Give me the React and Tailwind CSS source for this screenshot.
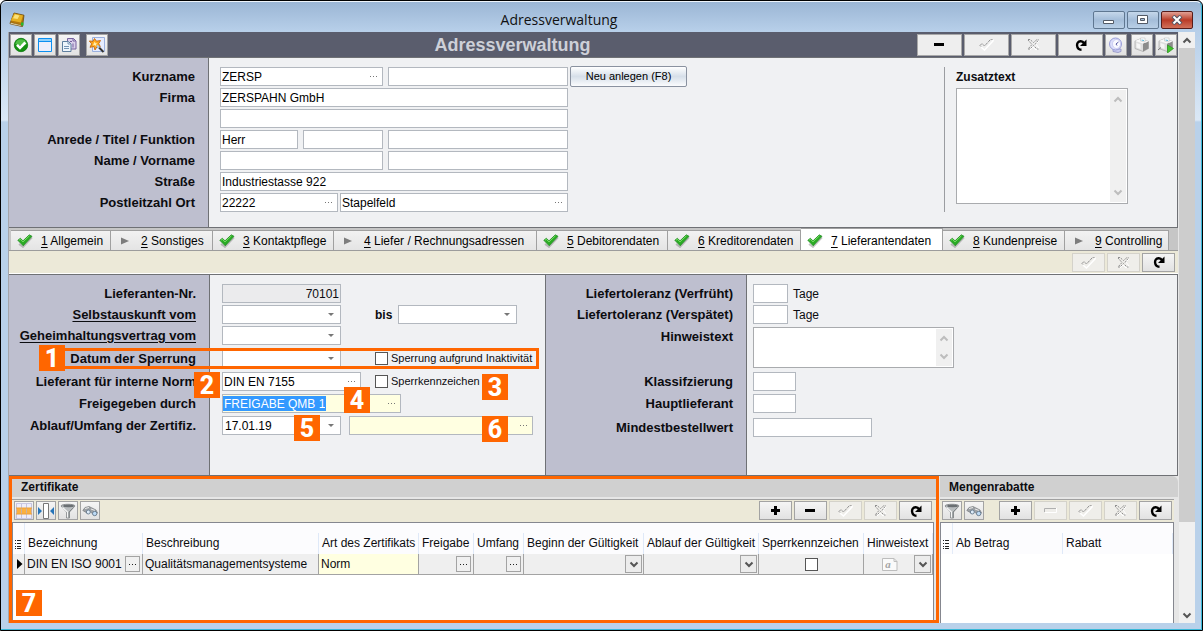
import React from "react";

const FIELD = "h-[19px] min-w-0 border border-[#b3b8bf] bg-white px-px text-[12px] text-black outline-none";

function Svg({ w = 16, h = 16, children }) {
  return (
    <svg width={w} height={h} viewBox={`0 0 ${w} ${h}`} fill="none" aria-hidden="true" className="shrink-0">
      {children}
    </svg>
  );
}

/* ---------- glyphs ---------- */

const Minus = () => <Svg w={11} h={11}><path d="M0 4h10v3H0z" fill="#000" /></Svg>;
const Plus = () => <Svg w={11} h={11}><path d="M4 1h3v3h3v3H7v3H4V7H1V4h3z" fill="#000" /></Svg>;
const MinusOff = () => <Svg w={13} h={7}><path d="M12.500 1v4.500H1" stroke="#fff" /><path d="M.5 5V1.500H12" stroke="#b0b0b0" /></Svg>;
const TickOff = () => (
  <Svg w={15} h={13}>
    <path d="M2 9l3.500 3L14 3V1.500" stroke="#fff" strokeWidth="1.500" />
    <path d="M1 7.500l2-2 2.500 2.500L11.500 1.500h2M1 7.500l1 1" stroke="#8f8f8f" strokeDasharray="3 1" />
  </Svg>
);
const CrossOff = () => (
  <Svg w={13} h={13}>
    <path d="M3 12l3-3 3 3 3-2-3-4 3-3" stroke="#fff" />
    <path d="M1 1.500h2l3.500 3 3.500-3h1.500M1 2l4 4.500L1 11h2l3.500-3.500L10 11h1.500M8 6.500L11.500 2" stroke="#8f8f8f" strokeDasharray="2 1" />
  </Svg>
);
const Redo = () => (
  <Svg w={12} h={12}>
    <path d="M6.500 10.700C1 10.500.5 2.500 5.500 2.200c1.800-.1 2.800.7 3.300 1.800" stroke="#000" strokeWidth="2.400" />
    <path d="M11.500.500v6.500H5z" fill="#000" />
  </Svg>
);
const Chevron = ({ up, color = "#555" }) => (
  <Svg w={10} h={7}>
    <path d={up ? "M1.500 5.500L5 2l3.500 3.500" : "M1.500 1.500L5 5l3.500-3.500"} stroke={color} strokeWidth="2" />
  </Svg>
);
const GreenCheck = () => (
  <Svg w={16} h={14}>
    <path d="M2 10l4 3L15 3.500" stroke="#777" strokeOpacity=".45" strokeWidth="1.800" />
    <path d="M.8 6.300L3.300 4.300 6 6.800 12.300.8 15 2.300 6.200 11.800z" fill="#2bab25" stroke="#17861a" strokeWidth=".7" />
    <path d="M2 6.200l1.300-.9L6 7.900 12.500 1.700" stroke="#7ee36a" strokeWidth=".9" />
  </Svg>
);
const GrayTri = () => <Svg w={8} h={8}><path d="M0 .5L8 4 0 7.500z" fill="#7d7d7d" /></Svg>;

const OkIcon = () => (
  <Svg>
    <circle cx="8" cy="8" r="6.700" fill="#12900f" stroke="#0d7a10" strokeWidth=".8" />
    <path d="M2.200 7a5.900 5.900 0 0111.600 0C11 8.500 5 9 2.200 7z" fill="#4fbd45" />
    <path d="M4 7.800l3 3 5.300-5.300" stroke="#fff" strokeWidth="2.600" />
  </Svg>
);
const WindowIcon = () => (
  <Svg>
    <path d="M1.500 1.500h13v13h-13z" fill="#eceefb" stroke="#0b8ff0" />
    <path d="M2 2h12v2H2z" fill="#8fd0fb" />
    <path d="M2 4.500h12" stroke="#0b8ff0" />
  </Svg>
);
const CopyIcon = () => (
  <Svg>
    <path d="M6.500 1.500h6l2.500 2.500v8H6.500z" fill="#d9d0ea" stroke="#77629f" />
    <path d="M12 1.500V4h2.500M9 4.500h2M12 6.500v4" stroke="#77629f" />
    <path d="M1.500 4.500h6L10 7v7.500H1.500z" fill="#eef5fb" stroke="#5f7f9f" />
    <path d="M7 4.500V7h2.500M3 9.500h5M3 11.500h5" stroke="#7695b5" />
  </Svg>
);
const WandIcon = () => (
  <Svg>
    <path d="M3.500.500h12v14h-12z" fill="#e5ecff" stroke="#9ab0df" />
    <path d="M5.500 1.500l2 2.700 4-.7-1.800 3.200 1.600 2.800-3.300.2L6 13 5 9.500l-4 .8 1.700-3.500L.3 4l3.700.3z" fill="#ffa91f" stroke="#c5680d" strokeWidth=".9" />
    <path d="M5.700 4.800l.9 1.400 1.700.2-1.300 1.200.2 1.500L5.500 8 4 8.500l.6-1.700z" fill="#fff0b0" />
    <path d="M9 9.500l5.500 5.500" stroke="#333" strokeWidth="2" />
    <path d="M8 8.500l2.200 2.200" stroke="#a9c9ea" strokeWidth="2.200" />
  </Svg>
);
const BookIcon = () => (
  <Svg>
    <path d="M5 1L15 3.200 13.500 14.500 1 11.500z" fill="#b57a0c" stroke="#6e4a05" strokeWidth=".8" />
    <path d="M5.200 1.500L14 3.500 11.800 10.500 1.800 8.500z" fill="#e6b020" />
    <path d="M6 2.500l4.500 1L8.500 7 4 6.300z" fill="#fbe27a" />
    <path d="M1.300 10.500L12 13l.3 1.300L1.300 12z" fill="#fff6d6" stroke="#6e4a05" strokeWidth=".5" />
    <path d="M12 10.500h2.500v3H12z" fill="#27b82b" />
  </Svg>
);
const DialIcon = () => (
  <Svg>
    <path d="M5 12h8v2.500l-3 1-5-1z" fill="#c9cbf0" stroke="#8486bf" strokeWidth=".7" />
    <circle cx="7.500" cy="7" r="6" fill="#dcdffb" stroke="#9a9dd8" />
    <ellipse cx="8.500" cy="7" rx="4" ry="4.500" fill="#fafaff" stroke="#b9bbea" strokeWidth=".6" />
    <path d="M8 7l2.500-2M8 7l1 1.500" stroke="#5558a5" />
  </Svg>
);
const PrinterShape = () => (
  <>
    <path d="M1 4l5-2 8.500 2.500v7L9 14.500 1 11.500z" fill="#dedede" stroke="#9c9c9c" strokeWidth=".6" />
    <path d="M9 6.500l5.500-2v7L9 14.500z" fill="#8c8c8c" />
    <path d="M1 4l5-2 8.500 2.500L9 6.500z" fill="#f9f9f9" />
    <path d="M6.500 1h4.500v4L6.500 4z" fill="#fff" stroke="#b5b5b5" strokeWidth=".5" />
    <path d="M7.500 3l2.500.5" stroke="#55b4d8" />
    <path d="M2.500 6l4 1.500v4.500L2.500 10.500z" fill="#f6f6f6" />
  </>
);
const PrinterIcon = () => <Svg><PrinterShape /></Svg>;
const PrinterPlayIcon = () => (
  <Svg><PrinterShape /><path d="M0 13l3-2.500" stroke="#777" /><path d="M9.500 8l6 3.500-6 4.500z" fill="#42c52d" stroke="#2c9420" strokeWidth=".7" /></Svg>
);
const GridIcon = () => (
  <Svg>
    <path d="M0 0h16v16H0z" fill="#eeedfa" />
    <path d="M0 5h16v6H0z" fill="#fbb040" />
    <path d="M.5 0v16M5.500 0v16M10.500 0v16M15.500 0v16" stroke="#b4b2cf" strokeOpacity=".7" />
    <path d="M0 .5h16M0 15.500h16" stroke="#c9c8e4" />
    <path d="M0 5h16M0 11h16" stroke="#eda03a" />
  </Svg>
);
const WidthIcon = () => (
  <Svg>
    <path d="M5.500.500h5v15h-5z" fill="#fff" stroke="#777" />
    <path d="M0 4l4 4-4 4zM16 4l-4 4 4 4z" fill="#2675b8" />
  </Svg>
);
const FunnelIcon = () => (
  <Svg>
    <path d="M1 3C1 .7 15 .7 15 3L9.500 9v6h-3V9z" fill="#b9bdbf" stroke="#7b7f82" strokeWidth=".8" />
    <ellipse cx="8.500" cy="3" rx="5.500" ry="1.200" fill="#6b7073" />
    <path d="M2.500 4.500l5 4.500v5.500" stroke="#f5f6f6" strokeWidth="1.200" />
    <path d="M13 5L9 9v5.500" stroke="#83888a" />
  </Svg>
);
const BinocularsIcon = () => (
  <Svg>
    <path d="M.8 7.500L3 4.500l4-1 3 1.500 4 2 1.500 3-2.500 2-3-1.500-2-2-3 1.500z" fill="#9da1a5" stroke="#6a6e72" strokeWidth=".6" />
    <path d="M3 5.500l4-1M9 6l4 1.500" stroke="#ececec" />
    <circle cx="6.300" cy="9" r="2" fill="#dcebf9" stroke="#64788c" strokeWidth=".9" />
    <circle cx="12.700" cy="10.500" r="2.200" fill="#bcdaf5" stroke="#64788c" strokeWidth=".9" />
  </Svg>
);
const ListIcon = () => (
  <Svg w={7} h={10}>
    <path d="M0 1.500h1M2 1.500h4M0 4.500h1M2 4.500h4M0 7.500h1M2 7.500h4M0 9.500h1M2 9.500h4" stroke="#222" />
  </Svg>
);
const NoteIcon = () => (
  <Svg w={16} h={13}>
    <path d="M.5.500h11.500l3 3v9H.500z" fill="#fafafa" stroke="#bdbdbd" />
    <path d="M12 .5v3h3" stroke="#bdbdbd" />
  </Svg>
);

/* ---------- controls ---------- */

function IconBtn({ label, children, small }) {
  return (
    <button
      type="button"
      aria-label={label}
      className={`flex shrink-0 items-center justify-center border border-[#a3a3a3] bg-linear-to-b from-[#f5f5f5] to-[#e2e2e2] ${small ? "h-[19px] w-5" : "h-[22px] w-[22px]"}`}
    >
      {children}
    </button>
  );
}

function WideBtn({ label, children, off, tall }) {
  return (
    <button
      type="button"
      aria-label={label}
      disabled={off}
      className={`flex shrink-0 items-center justify-center border ${
        tall ? "h-[22px] w-[45px] border-[#a8a8a8] bg-[#eeeeee]" : off ? "h-[19px] w-[33px] border-[#d4d2ca] bg-[#efeeea]" : "h-[19px] w-[33px] border-[#a3a3a3] bg-linear-to-b from-[#f5f5f5] to-[#e2e2e2]"
      }`}
    >
      {children}
    </button>
  );
}

function Lookup({ id, label, value = "", className, yellow, selected }) {
  return (
    <div className={`flex h-[19px] items-center border border-[#b3b8bf] ${yellow ? "bg-[#ffffe1]" : "bg-white"} ${className}`}>
      <input
        id={id}
        aria-label={label}
        defaultValue={value}
        className={`h-[15px] min-w-0 px-px text-[12px] outline-none ${selected ? "w-[103px] bg-[#3399ff] text-white" : "flex-1 bg-transparent text-black"}`}
      />
      <button type="button" aria-label="Auswahl" className="ml-auto flex h-full w-[17px] shrink-0 items-center justify-center">
        <Svg w={8} h={1}><path d="M0 .5h1M3 .5h1M6 .5h1" stroke="#777" /></Svg>
      </button>
    </div>
  );
}

function Combo({ id, label, value = "" }) {
  return (
    <div className="grid h-[19px] w-[119px] items-center border border-[#b3b8bf] bg-white">
      <select id={id} aria-label={label} defaultValue={value} className="col-start-1 row-start-1 h-[17px] w-full appearance-none bg-transparent px-0.5 text-[12px] text-black outline-none">
        <option value={value}>{value}</option>
      </select>
      <span className="pointer-events-none col-start-1 row-start-1 mr-1.5 justify-self-end">
        <Svg w={6} h={3}><path d="M0 0h6L3 3z" fill="#777" /></Svg>
      </span>
    </div>
  );
}

function Memo({ id, label, className }) {
  return (
    <div className={`flex border border-[#a9abae] bg-white p-px ${className}`}>
      <textarea id={id} aria-label={label} className="h-full min-w-0 flex-1 resize-none text-[12px] outline-none" />
      <div className="flex w-4 shrink-0 flex-col items-center justify-between bg-[#f0f0f0] py-1.5">
        <Chevron up color="#bdbdbd" />
        <Chevron color="#bdbdbd" />
      </div>
    </div>
  );
}

function Check({ label }) {
  return (
    <label className="flex items-center gap-[3px] whitespace-nowrap text-[11px]">
      <input type="checkbox" className="h-[13px] w-[13px] appearance-none border border-[#555] bg-white" />
      {label}
    </label>
  );
}

function Badge({ n, className }) {
  return (
    <span className={`absolute flex h-[26px] w-[26px] items-center justify-center bg-[#ff6600] font-[Roboto,sans-serif] text-[25px] leading-none font-extrabold text-white ${className}`}>
      {n}
    </span>
  );
}

function RowLabel({ htmlFor, children, h = "h-[21px]", link, top }) {
  return (
    <div className={`flex justify-end whitespace-nowrap text-[13px] font-bold ${top ? "items-start pt-0.5" : "items-center"} ${h}`}>
      <label htmlFor={htmlFor} className={link ? "underline underline-offset-2" : ""}>{children}</label>
    </div>
  );
}

/* ---------- sections ---------- */

function TitleBar() {
  const frame = "flex h-[18px] w-8 items-center justify-center rounded-[2px] border";
  return (
    <header className="flex h-[30px] shrink-0 items-center px-2 pt-1.5">
      <BookIcon />
      <div className="flex-1 text-center font-['Open_Sans',sans-serif] text-[14px] leading-5 text-[#111]">Adressverwaltung</div>
      <div className="flex gap-0.5">
        <button type="button" aria-label="Minimieren" className={`${frame} border-[#5f7791] bg-linear-to-b from-[#c5d7ea] via-[#a4bdd9] to-[#b9cfe6]`}>
          <Svg w={12} h={10}><path d="M.5 5.500h10v3H.5z" fill="#fff" stroke="#535a66" /></Svg>
        </button>
        <button type="button" aria-label="Maximieren" className={`${frame} border-[#5f7791] bg-linear-to-b from-[#c5d7ea] via-[#a4bdd9] to-[#b9cfe6]`}>
          <Svg w={12} h={10}><path d="M.5.500h10v8H.5z" fill="#fff" stroke="#535a66" /><path d="M3.500 3.500h4v2h-4z" fill="#a4bdd9" stroke="#535a66" /></Svg>
        </button>
        <button type="button" aria-label="Schließen" className={`${frame} border-[#571c1a] bg-linear-to-b from-[#e0a095] via-[#b93a26] to-[#d1705a]`}>
          <Svg w={12} h={10}><path d="M2 1l8 8M10 1L2 9" stroke="#535666" strokeWidth="4" /><path d="M2.500 1.500l7 7M9.500 1.500l-7 7" stroke="#fff" strokeWidth="2" /></Svg>
        </button>
      </div>
    </header>
  );
}

function Toolbar() {
  return (
    <div className="flex h-[25px] shrink-0 items-center bg-[#5a5d6d] px-px">
      <div className="flex gap-0.5">
        <IconBtn label="Übernehmen"><OkIcon /></IconBtn>
        <IconBtn label="Fenster"><WindowIcon /></IconBtn>
        <IconBtn label="Kopieren"><CopyIcon /></IconBtn>
      </div>
      <div className="ml-1.5"><IconBtn label="Assistent"><WandIcon /></IconBtn></div>
      <h1 className="flex-1 text-center text-[18px] leading-6 font-bold text-[#cdd0d8]">Adressverwaltung</h1>
      <div className="flex gap-0.5">
        <WideBtn tall label="Löschen"><Minus /></WideBtn>
        <WideBtn tall off label="Speichern"><TickOff /></WideBtn>
        <WideBtn tall off label="Abbrechen"><CrossOff /></WideBtn>
        <WideBtn tall label="Aktualisieren"><Redo /></WideBtn>
        <IconBtn label="Anrufen"><DialIcon /></IconBtn>
      </div>
      <div className="ml-1 flex gap-0.5">
        <IconBtn label="Drucken"><PrinterIcon /></IconBtn>
        <IconBtn label="Druck starten"><PrinterPlayIcon /></IconBtn>
      </div>
    </div>
  );
}

function AddressForm() {
  return (
    <section className="flex h-[171px] shrink-0 border-y border-[#6f7175] bg-[#bebfcf]">
      <div className="w-[199px] shrink-0 pt-2 pr-[13px]">
        <RowLabel htmlFor="kurz">Kurzname</RowLabel>
        <RowLabel htmlFor="firma">Firma</RowLabel>
        <div className="h-[21px]" />
        <RowLabel htmlFor="anrede">Anrede / Titel / Funktion</RowLabel>
        <RowLabel htmlFor="name">Name / Vorname</RowLabel>
        <RowLabel htmlFor="strasse">Straße</RowLabel>
        <RowLabel htmlFor="plz">Postleitzahl Ort</RowLabel>
      </div>
      <div className="flex flex-1 border-x border-[#6f7175] bg-[#f0f1f3] pt-[9px] pl-[11px]">
        <div className="flex w-[348px] shrink-0 flex-col gap-0.5">
          <div className="flex gap-[5px]">
            <Lookup id="kurz" value="ZERSP" className="w-[163px]" />
            <input aria-label="Kurzname Zusatz" className={`${FIELD} flex-1`} />
          </div>
          <input id="firma" defaultValue="ZERSPAHN GmbH" className={FIELD} />
          <input aria-label="Firma 2" className={FIELD} />
          <div className="flex gap-[5px]">
            <input id="anrede" defaultValue="Herr" className={`${FIELD} w-[78px]`} />
            <input aria-label="Titel" className={`${FIELD} w-20`} />
            <input aria-label="Funktion" className={`${FIELD} flex-1`} />
          </div>
          <div className="flex gap-[5px]">
            <input id="name" className={`${FIELD} w-[163px]`} />
            <input aria-label="Vorname" className={`${FIELD} flex-1`} />
          </div>
          <input id="strasse" defaultValue="Industriestasse 922" className={FIELD} />
          <div className="flex gap-0.5">
            <Lookup id="plz" value="22222" className="w-[118px]" />
            <Lookup label="Ort" value="Stapelfeld" className="flex-1" />
          </div>
        </div>
        <div className="ml-0.5 flex h-[19px] items-center">
          <button type="button" className="h-[21px] w-[117px] shrink-0 rounded-[2px] border border-[#8a92a0] bg-linear-to-b from-white via-[#d6dfe9] via-50% to-[#fbfcfd] text-[11px] text-black">
            Neu anlegen (F8)
          </button>
        </div>
        <div className="mr-[49px] mb-[15px] ml-auto flex flex-col border-l border-[#9b9da1] pl-[11px]">
          <label htmlFor="zusatz" className="h-[21px] text-[12px] leading-[21px] font-bold">Zusatztext</label>
          <Memo id="zusatz" className="h-[116px] w-[172px]" />
        </div>
      </div>
    </section>
  );
}

const TABS = [
  { n: 1, t: "Allgemein", done: true, w: "w-[100px]" },
  { n: 2, t: "Sonstiges", w: "w-[102px]" },
  { n: 3, t: "Kontaktpflege", done: true, w: "w-[121px]" },
  { n: 4, t: "Liefer / Rechnungsadressen", w: "w-[203px]" },
  { n: 5, t: "Debitorendaten", done: true, w: "w-[131px]" },
  { n: 6, t: "Kreditorendaten", done: true, w: "w-[133px]" },
  { n: 7, t: "Lieferantendaten", done: true, active: true, w: "w-[142px]" },
  { n: 8, t: "Kundenpreise", done: true, w: "w-[122px]" },
  { n: 9, t: "Controlling", w: "w-[104px]" },
];

function Tabs() {
  return (
    <nav role="tablist" className="flex h-[23px] shrink-0 items-end border-b border-[#9c9c9c] bg-[#c6c6c6] pl-0.5">
      {TABS.map(({ n, t, done, active, w }) => (
        <button
          key={n}
          type="button"
          role="tab"
          aria-selected={!!active}
          className={`flex shrink-0 items-center border-t border-r border-[#a0a0a0] text-[12px] whitespace-nowrap text-black ${w} ${active ? "h-[22px] bg-white pt-0.5" : "h-5 bg-linear-to-b from-[#f2f2f2] to-[#e4e4e4] pt-px"}`}
        >
          <span className="flex w-[30px] shrink-0 items-center justify-center pr-0.5">{done ? <GreenCheck /> : <GrayTri />}</span>
          <span><span className="underline underline-offset-2">{n}</span> {t}</span>
        </button>
      ))}
    </nav>
  );
}

function SupplierForm() {
  const tall = "h-[25px]";
  const mid = "h-[23px]";
  const row = "grid grid-cols-[153px_1fr] items-center";
  return (
    <section className="relative flex h-[202px] shrink-0 border-y border-[#6f7175] bg-[#bebfcf]">
      <div className="w-[200px] shrink-0 pt-2 pr-[13px]">
        <RowLabel htmlFor="nr">Lieferanten-Nr.</RowLabel>
        <RowLabel htmlFor="selbst" link>Selbstauskunft vom</RowLabel>
        <RowLabel htmlFor="geheim" link>Geheimhaltungsvertrag vom</RowLabel>
        <RowLabel htmlFor="sperre" h={tall}>Datum der Sperrung</RowLabel>
        <RowLabel htmlFor="norm">Lieferant für interne Norm</RowLabel>
        <RowLabel htmlFor="frei" h={mid}>Freigegeben durch</RowLabel>
        <RowLabel htmlFor="ablauf">Ablauf/Umfang der Zertifiz.</RowLabel>
      </div>
      <div className="w-[337px] shrink-0 border-x border-[#6f7175] bg-[#f0f1f3] pt-2 pl-3">
        <div className={`${row} h-[21px]`}>
          <input id="nr" readOnly defaultValue="70101" className="h-[19px] w-[119px] border border-[#b3b8bf] bg-[#ebebed] px-px text-right text-[12px] outline-none" />
        </div>
        <div className={`${row} h-[21px]`}>
          <Combo id="selbst" />
          <div className="flex items-center">
            <label htmlFor="bis" className="w-[23px] text-[12px] font-bold">bis</label>
            <Combo id="bis" />
          </div>
        </div>
        <div className={`${row} h-[21px]`}><Combo id="geheim" /></div>
        <div className={`${row} ${tall}`}><Combo id="sperre" /><Check label="Sperrung aufgrund Inaktivität" /></div>
        <div className={`${row} h-[21px]`}><Lookup id="norm" value="DIN EN 7155" className="w-[139px]" /><Check label="Sperrkennzeichen" /></div>
        <div className={`flex items-center ${mid}`}><Lookup id="frei" value="FREIGABE QMB 1" yellow selected className="w-[179px]" /></div>
        <div className="flex h-[21px] items-center gap-2">
          <Combo id="ablauf" value="17.01.19" />
          <Lookup label="Umfang der Zertifizierung" yellow className="w-[184px]" />
        </div>
      </div>
      <div className="w-[200px] shrink-0 pt-2 pr-[13px]">
        <RowLabel htmlFor="frueh">Liefertoleranz (Verfrüht)</RowLabel>
        <RowLabel htmlFor="spaet">Liefertoleranz (Verspätet)</RowLabel>
        <RowLabel htmlFor="hinweis" h="h-[46px]" top>Hinweistext</RowLabel>
        <RowLabel htmlFor="klasse">Klassifzierung</RowLabel>
        <RowLabel htmlFor="haupt" h={mid}>Hauptlieferant</RowLabel>
        <RowLabel htmlFor="mindest" h={tall}>Mindestbestellwert</RowLabel>
      </div>
      <div className="flex-1 border-x border-[#6f7175] bg-[#f0f1f3] pt-2 pl-1.5">
        <div className="flex h-[21px] items-center gap-[5px] text-[12px]"><input id="frueh" className={`${FIELD} w-[35px]`} />Tage</div>
        <div className="flex h-[21px] items-center gap-[5px] text-[12px]"><input id="spaet" className={`${FIELD} w-[35px]`} />Tage</div>
        <div className="h-[46px] pt-0.5"><Memo id="hinweis" className="h-[41px] w-[201px]" /></div>
        <div className="flex h-[21px] items-center"><input id="klasse" className={`${FIELD} w-[43px]`} /></div>
        <div className={`flex items-center ${mid}`}><input id="haupt" className={`${FIELD} w-[43px]`} /></div>
        <div className={`flex items-center ${tall}`}><input id="mindest" className={`${FIELD} w-[119px]`} /></div>
      </div>
      <div className="pointer-events-none absolute top-[73px] left-[43px] h-[21px] w-[487px] border-3 border-[#ff6600]" />
      <Badge n="1" className="top-[70px] left-[30px]" />
      <Badge n="2" className="top-[97px] left-[185px]" />
      <Badge n="3" className="top-[99px] left-[473px]" />
      <Badge n="4" className="top-[112px] left-[335px]" />
      <Badge n="5" className="top-[140px] left-[285px]" />
      <Badge n="6" className="top-[141px] left-[473px]" />
    </section>
  );
}

const Dots = () => (
  <button type="button" aria-label="Auswahl" className="flex h-4 w-[15px] shrink-0 items-center justify-center border border-[#a3a3a3] bg-[#f0f0f0]">
    <Svg w={7} h={1}><path d="M0 .5h1M3 .5h1M6 .5h1" stroke="#222" /></Svg>
  </button>
);
const Drop = () => (
  <button type="button" aria-label="Öffnen" className="flex h-[18px] w-[17px] shrink-0 items-center justify-center border border-[#a3a3a3] bg-[#ececec]">
    <Chevron />
  </button>
);

const COLS = [
  ["Bezeichnung", "w-[118px]"],
  ["Beschreibung", "w-[176px]"],
  ["Art des Zertifikats", "w-[100px]"],
  ["Freigabe", "w-[55px]"],
  ["Umfang", "w-[50px]"],
  ["Beginn der Gültigkeit", "w-[120px]"],
  ["Ablauf der Gültigkeit", "w-[115px]"],
  ["Sperrkennzeichen", "w-[105px]"],
  ["Hinweistext", ""],
];

function Head({ cols }) {
  return (
    <thead>
      <tr className="h-[31px] bg-[#fcfcfe]">
        <th aria-label="Zeile" className="w-3 border-r border-[#e3ebf8] pt-2.5 pl-0.5"><ListIcon /></th>
        {cols.map(([t, w]) => (
          <th key={t} className={`p-0 pt-2.5 text-left align-bottom font-normal ${w}`}>
            <div className="h-[21px] border-r border-[#dfe9f8] pl-[3px] leading-[21px] whitespace-nowrap">{t}</div>
          </th>
        ))}
      </tr>
    </thead>
  );
}

function Certificates() {
  const cell = "border-r border-b border-[#a3a3a3] p-0";
  return (
    <section className="relative flex min-w-0 flex-1 flex-col border-3 border-[#ff6600] bg-[#e6e6e6]">
      <h2 className="h-[18px] bg-[#d0d0d0] pl-[9px] text-[12px] leading-4 font-bold">Zertifikate</h2>
      <div className="mt-0.5 flex h-[23px] items-start gap-0.5 border-t border-[#a0a0a0] bg-[#ece9d8] pt-px pr-1 pl-0.5">
        <IconBtn small label="Tabelle"><GridIcon /></IconBtn>
        <IconBtn small label="Spaltenbreite"><WidthIcon /></IconBtn>
        <IconBtn small label="Filter"><FunnelIcon /></IconBtn>
        <IconBtn small label="Suchen"><BinocularsIcon /></IconBtn>
        <div className="flex-1" />
        <WideBtn label="Neu"><Plus /></WideBtn>
        <WideBtn label="Löschen"><Minus /></WideBtn>
        <WideBtn off label="Speichern"><TickOff /></WideBtn>
        <WideBtn off label="Abbrechen"><CrossOff /></WideBtn>
        <WideBtn label="Aktualisieren"><Redo /></WideBtn>
      </div>
      <div className="mr-0.5 flex-1 border border-b-0 border-[#85878f] bg-white">
        <table className="w-full table-fixed border-separate border-spacing-0 text-[12px]">
          <Head cols={COLS} />
          <tbody>
            <tr className="h-[21px] bg-[#efefef]">
              <td className={`${cell} pl-1`}><Svg w={6} h={10}><path d="M0 0l5.500 5L0 10z" fill="#000" /></Svg></td>
              <td className={cell}><div className="flex items-center justify-between pr-0.5 pl-0.5 whitespace-nowrap">DIN EN ISO 9001<Dots /></div></td>
              <td className={`${cell} pl-0.5`}>Qualitätsmanagementsysteme</td>
              <td className={`${cell} bg-[#ffffe1] pl-0.5`}>Norm</td>
              <td className={cell}><div className="flex justify-end pr-0.5"><Dots /></div></td>
              <td className={cell}><div className="flex justify-end pr-0.5"><Dots /></div></td>
              <td className={cell}><div className="flex justify-end pr-px"><Drop /></div></td>
              <td className={cell}><div className="flex justify-end pr-px"><Drop /></div></td>
              <td className={cell}><input type="checkbox" aria-label="Sperrkennzeichen" className="mx-auto block h-[13px] w-[13px] appearance-none border border-[#555] bg-white" /></td>
              <td className={cell}>
                <div className="flex items-center justify-end gap-4 pr-px">
                  <span className="grid items-center justify-items-center">
                    <span className="col-start-1 row-start-1"><NoteIcon /></span>
                    <span className="col-start-1 row-start-1 pr-1 font-['Liberation_Serif',serif] text-[11px] leading-3 font-bold text-[#a5a5a5] italic">a</span>
                  </span>
                  <Drop />
                </div>
              </td>
            </tr>
          </tbody>
        </table>
      </div>
      <Badge n="7" className="top-[111px] left-1" />
    </section>
  );
}

const DISCOUNT_COLS = [["Ab Betrag", "w-[110px]"], ["Rabatt", ""]];

function Discounts() {
  return (
    <section className="flex w-[238px] shrink-0 flex-col bg-[#e6e6e6]">
      <h2 className="h-[21px] rounded-tr-md bg-[#d0d0d0] pl-[9px] text-[12px] leading-[22px] font-bold">Mengenrabatte</h2>
      <div className="mt-0.5 mr-1 flex h-[23px] items-start gap-0.5 border-t border-[#a0a0a0] bg-[#ece9d8] px-0.5 pt-px">
        <IconBtn small label="Filter"><FunnelIcon /></IconBtn>
        <IconBtn small label="Suchen"><BinocularsIcon /></IconBtn>
        <div className="flex-1" />
        <WideBtn label="Neu"><Plus /></WideBtn>
        <WideBtn off label="Löschen"><MinusOff /></WideBtn>
        <WideBtn off label="Speichern"><TickOff /></WideBtn>
        <WideBtn off label="Abbrechen"><CrossOff /></WideBtn>
        <WideBtn label="Aktualisieren"><Redo /></WideBtn>
      </div>
      <div className="mr-1 flex-1 border border-b-0 border-[#85878f] bg-white">
        <table className="w-full table-fixed border-separate border-spacing-0 text-[12px]">
          <Head cols={DISCOUNT_COLS} />
        </table>
      </div>
    </section>
  );
}

export default function App() {
  return (
    <div className="flex min-h-screen flex-col overflow-hidden rounded-t-md border border-black bg-[#b9d1ea] bg-linear-[to_bottom,#9ab5d4_0px,#b7cfe9_30px,#dbe8f6_119px,#b9d1ea_121px] font-['Liberation_Sans',Arial,sans-serif] text-[#0c0c10]">
      <div className="flex flex-1 flex-col rounded-t-md border-t border-r border-b border-t-[#eef4fb] border-r-[#38b8d8] border-b-[#38b8d8]">
        <TitleBar />
        <div className="mr-1.5 mb-1.5 ml-[7px] flex flex-1 border-l border-[#a5a6ab] bg-[#e6e6e6]">
          <main className="flex min-w-0 flex-1 flex-col pr-px">
            <Toolbar />
            <AddressForm />
            <Tabs />
            <div className="flex h-[23px] shrink-0 items-center justify-end gap-0.5 border-b border-white bg-[#ece9d8] pr-[3px]">
              <WideBtn off label="Speichern"><TickOff /></WideBtn>
              <WideBtn off label="Abbrechen"><CrossOff /></WideBtn>
              <WideBtn label="Aktualisieren"><Redo /></WideBtn>
            </div>
            <SupplierForm />
            <div className="flex flex-1 gap-px">
              <Certificates />
              <Discounts />
            </div>
          </main>
          <div className="flex w-4 shrink-0 flex-col items-center bg-[#f0f0f0]">
            <div className="flex h-4 items-center"><Chevron up /></div>
            <div className="w-full flex-[477] bg-[#cdcdcd]" />
            <div className="flex flex-[98] items-end pb-1"><Chevron /></div>
          </div>
        </div>
      </div>
    </div>
  );
}
